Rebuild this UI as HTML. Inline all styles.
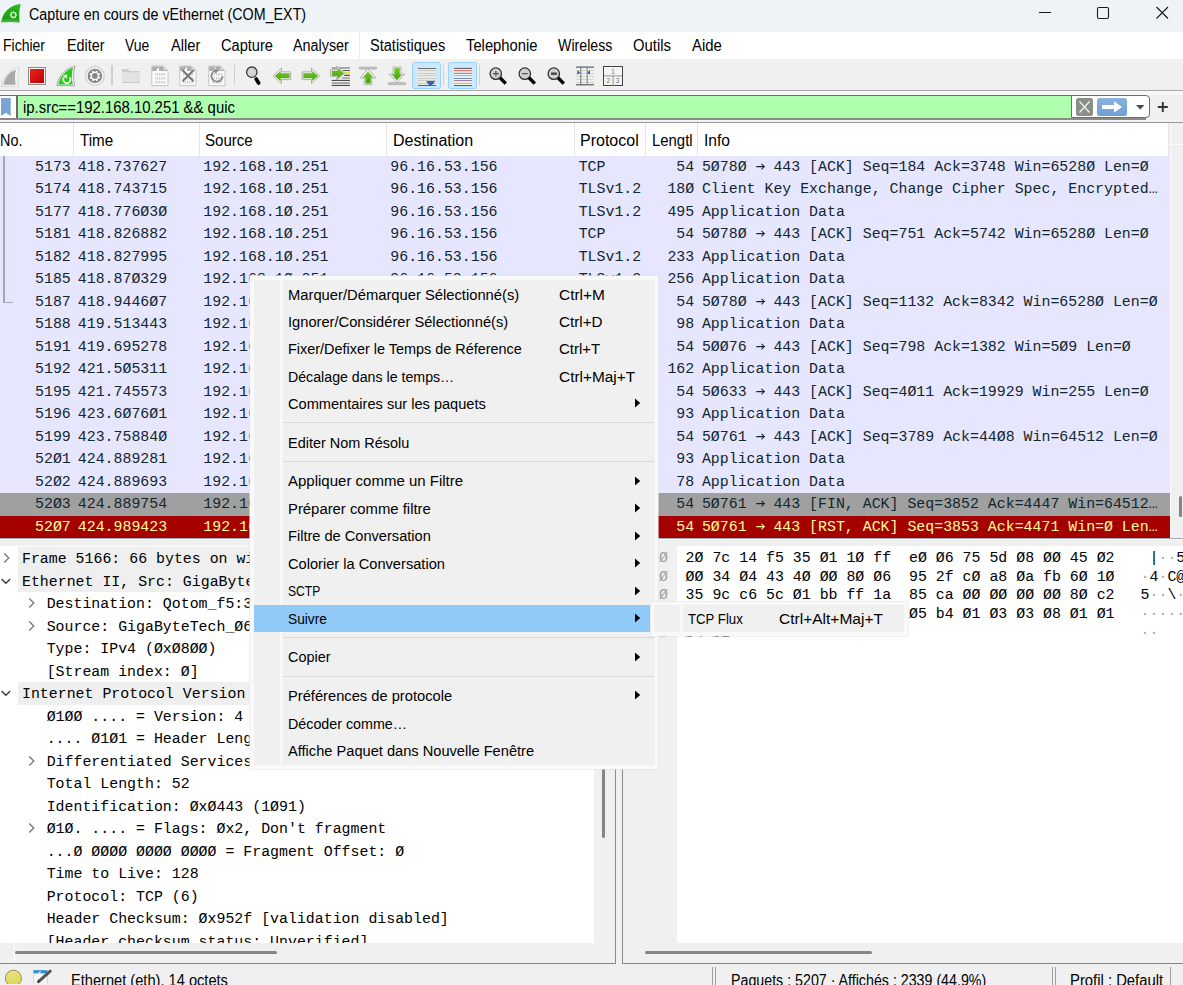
<!DOCTYPE html>
<html><head><meta charset="utf-8"><title>Wireshark</title>
<style>
html,body{margin:0;padding:0}
body{width:1183px;height:985px;overflow:hidden;position:relative;background:#f0f0f0}
body div, body svg{position:absolute}
.t{white-space:pre;line-height:0;height:0}
.S{font-family:"Liberation Sans", sans-serif}
.M{font-family:"Liberation Mono", monospace}
</style></head><body>
<div style="left:0px;top:0px;width:1183px;height:32px;background:#eef3f8;"></div>
<svg style="left:0px;top:2px;" width="24" height="24" viewBox="0 0 24 24"><defs><linearGradient id="gf" x1="0" y1="0" x2="0" y2="1"><stop offset="0" stop-color="#2cba1c"/><stop offset=".75" stop-color="#1a9e12"/><stop offset="1" stop-color="#5cb858"/></linearGradient></defs><path d="M1.2 20.5 C2.2 11 9 3.2 20.7 2 C19.2 8 18.7 14 19.8 20.8 C13 19.8 7 19.8 1.2 20.5 Z" fill="url(#gf)"/><g fill="#d8eed2"><rect x="12.8" y="9.3" width="1.3" height="1.6" transform="rotate(0 13.4 12.9)"/><rect x="12.8" y="9.3" width="1.3" height="1.6" transform="rotate(45 13.4 12.9)"/><rect x="12.8" y="9.3" width="1.3" height="1.6" transform="rotate(90 13.4 12.9)"/><rect x="12.8" y="9.3" width="1.3" height="1.6" transform="rotate(135 13.4 12.9)"/><rect x="12.8" y="9.3" width="1.3" height="1.6" transform="rotate(180 13.4 12.9)"/><rect x="12.8" y="9.3" width="1.3" height="1.6" transform="rotate(225 13.4 12.9)"/><rect x="12.8" y="9.3" width="1.3" height="1.6" transform="rotate(270 13.4 12.9)"/><rect x="12.8" y="9.3" width="1.3" height="1.6" transform="rotate(315 13.4 12.9)"/></g><circle cx="13.4" cy="12.9" r="2.4" fill="none" stroke="#d8eed2" stroke-width="1.2"/></svg>
<div class="t S" style="left:28.50px;top:14.70px;font-size:16px;color:#000;transform:scaleX(0.8929);transform-origin:0 0;">Capture en cours de vEthernet (COM_EXT)</div>
<svg style="left:1030px;top:0px;" width="153" height="32" viewBox="0 0 153 32"><line x1="9" y1="12.5" x2="21" y2="12.5" stroke="#1a1a1a" stroke-width="1"/><rect x="67.5" y="7.5" width="11" height="11" rx="1.5" fill="none" stroke="#1a1a1a" stroke-width="1.1"/><path d="M126.5 7 L138 18.5 M138 7 L126.5 18.5" stroke="#1a1a1a" stroke-width="1.1"/></svg>
<div style="left:0px;top:32px;width:1183px;height:27px;background:#ffffff;"></div>
<div style="left:359px;top:32px;width:1px;height:26px;background:#ececec;"></div>
<div class="t S" style="left:3.00px;top:46.20px;font-size:16px;color:#000;transform:scaleX(0.8747);transform-origin:0 0;">Fichier</div>
<div class="t S" style="left:66.50px;top:46.20px;font-size:16px;color:#000;transform:scaleX(0.8949);transform-origin:0 0;">Editer</div>
<div class="t S" style="left:125.40px;top:46.20px;font-size:16px;color:#000;transform:scaleX(0.8718);transform-origin:0 0;">Vue</div>
<div class="t S" style="left:171.00px;top:46.20px;font-size:16px;color:#000;transform:scaleX(0.9183);transform-origin:0 0;">Aller</div>
<div class="t S" style="left:220.70px;top:46.20px;font-size:16px;color:#000;transform:scaleX(0.9134);transform-origin:0 0;">Capture</div>
<div class="t S" style="left:293.30px;top:46.20px;font-size:16px;color:#000;transform:scaleX(0.8979);transform-origin:0 0;">Analyser</div>
<div class="t S" style="left:369.80px;top:46.20px;font-size:16px;color:#000;transform:scaleX(0.9093);transform-origin:0 0;">Statistiques</div>
<div class="t S" style="left:466.10px;top:46.20px;font-size:16px;color:#000;transform:scaleX(0.9239);transform-origin:0 0;">Telephonie</div>
<div class="t S" style="left:558.40px;top:46.20px;font-size:16px;color:#000;transform:scaleX(0.8868);transform-origin:0 0;">Wireless</div>
<div class="t S" style="left:633.40px;top:46.20px;font-size:16px;color:#000;transform:scaleX(0.9267);transform-origin:0 0;">Outils</div>
<div class="t S" style="left:691.90px;top:46.20px;font-size:16px;color:#000;transform:scaleX(0.9308);transform-origin:0 0;">Aide</div>
<div style="left:0px;top:59px;width:1183px;height:31px;background:#f0f0f0;"></div>
<div style="left:0px;top:90px;width:1183px;height:1px;background:#a8a8a8;"></div>
<div style="left:0px;top:91px;width:1183px;height:4px;background:#f7f7f7;"></div>
<div style="left:111px;top:65px;width:2px;height:20px;background:#cfcfcf;"></div>
<div style="left:234px;top:65px;width:1px;height:20px;background:#cfcfcf;"></div>
<div style="left:412.1px;top:62.1px;width:28.6px;height:26.65px;background:#cce8ff;border:1px solid #99d1ff;border-radius:2.5px;box-sizing:border-box"></div>
<div style="left:443px;top:65px;width:1px;height:20px;background:#cfcfcf;"></div>
<div style="left:448.1px;top:62.1px;width:28.6px;height:26.65px;background:#cce8ff;border:1px solid #99d1ff;border-radius:2.5px;box-sizing:border-box"></div>
<div style="left:479px;top:65px;width:1px;height:20px;background:#cfcfcf;"></div>
<svg style="left:0px;top:62px;" width="24" height="28" viewBox="0 0 24 28"><path d="M1.4 24.4 C3 15 9 7 19.3 5.1 C17.6 11 17.3 18 18.5 24.4 Z" fill="#f6f6f6" stroke="#d2d2d2" stroke-width="0.9"/><path d="M3.4 22.7 C5 15 9.5 9.5 15.9 8 C14.6 12 14.5 17.5 15.8 22.7 Z" fill="#a9a9a9"/></svg>
<svg style="left:27px;top:66px;" width="20" height="20" viewBox="0 0 20 20"><rect x="1.5" y="1.5" width="17" height="17" fill="#fafafa" stroke="#8c8c8c" stroke-width="1"/><defs><linearGradient id="gr" x1="0" y1="0" x2="1" y2="1"><stop offset="0" stop-color="#e82424"/><stop offset="1" stop-color="#c20000"/></linearGradient></defs><rect x="3" y="3" width="14" height="14" fill="url(#gr)"/></svg>
<svg style="left:52px;top:62px;" width="28" height="28" viewBox="0 0 28 28"><path d="M4.8 23.6 C6.5 14 13 6 23 4.3 C21.3 10 21 17 22.7 23.6 Z" fill="#f8f8f8" stroke="#a4a4a4" stroke-width="1"/><path d="M6.3 22.5 C8 14.5 13.5 8 21 5.7 C19.6 10.5 19.4 17 20.8 22.5 Z" fill="#22cc14"/><path d="M12 15.3 A3.6 3.6 0 1 0 17.6 15.2" fill="none" stroke="#fff" stroke-width="1.6"/><path d="M10.8 13.4 L15.3 12.2 L14.6 16.8 Z" fill="#fff"/></svg>
<svg style="left:84px;top:65px;" width="22" height="22" viewBox="0 0 22 22"><circle cx="10.9" cy="10.9" r="9.4" fill="#f2f2f2" stroke="#cfcfcf" stroke-width="1.1"/><circle cx="10.9" cy="10.9" r="7.2" fill="#878787"/><g fill="#fafafa"><rect x="9.9" y="5.5" width="2" height="2.2" transform="rotate(20 10.9 10.9)"/><rect x="9.9" y="5.5" width="2" height="2.2" transform="rotate(65 10.9 10.9)"/><rect x="9.9" y="5.5" width="2" height="2.2" transform="rotate(110 10.9 10.9)"/><rect x="9.9" y="5.5" width="2" height="2.2" transform="rotate(155 10.9 10.9)"/><rect x="9.9" y="5.5" width="2" height="2.2" transform="rotate(200 10.9 10.9)"/><rect x="9.9" y="5.5" width="2" height="2.2" transform="rotate(245 10.9 10.9)"/><rect x="9.9" y="5.5" width="2" height="2.2" transform="rotate(290 10.9 10.9)"/><rect x="9.9" y="5.5" width="2" height="2.2" transform="rotate(335 10.9 10.9)"/></g><circle cx="10.9" cy="10.9" r="4" fill="#fafafa"/><circle cx="10.9" cy="10.9" r="2.8" fill="#858585"/></svg>
<svg style="left:116px;top:62px;" width="28" height="28" viewBox="0 0 28 28"><path d="M6 7 L12.3 7 L13.6 9.1 L23.9 9.1 L23.9 20.9 L6 20.9 Z" fill="#cdcdcd"/><rect x="6" y="10.3" width="17.9" height="10.6" fill="#e3e3e3"/><rect x="6" y="20" width="17.9" height="1" fill="#c9c9c9"/></svg>
<svg style="left:146px;top:62px;" width="28" height="28" viewBox="0 0 28 28"><path d="M5.8 4 L17.2 4 L22 8.8 L22 23.7 L5.8 23.7 Z" fill="#fdfdfd" stroke="#c2c2c2" stroke-width="1"/><path d="M6.2 4.4 L17 4.4 L21.6 8.9 L6.2 8.9 Z" fill="#adadad"/><path d="M10 8.9 C11 7 12 5.8 13 5.3 L13 8.9 Z" fill="#fdfdfd"/><path d="M17.5 5.5 L17.5 8 L20 8 Z" fill="#f0f0f0"/><g fill="#cbcbcb"><rect x="9.1" y="11.1" width="1.1" height="2.5"/><rect x="9.1" y="15.1" width="1.1" height="2.5"/><rect x="9.1" y="18.9" width="1.1" height="2.5"/><rect x="10.9" y="11.1" width="1.1" height="2.5"/><rect x="10.9" y="15.1" width="1.1" height="2.5"/><rect x="10.9" y="18.9" width="1.1" height="2.5"/><rect x="13" y="11.1" width="1.1" height="2.5"/><rect x="13" y="15.1" width="1.1" height="2.5"/><rect x="13" y="18.9" width="1.1" height="2.5"/><rect x="14.8" y="11.1" width="1.1" height="2.5"/><rect x="14.8" y="15.1" width="1.1" height="2.5"/><rect x="14.8" y="18.9" width="1.1" height="2.5"/><rect x="16.5" y="11.1" width="1.1" height="2.5"/><rect x="16.5" y="15.1" width="1.1" height="2.5"/><rect x="16.5" y="18.9" width="1.1" height="2.5"/><rect x="18.2" y="11.1" width="1.1" height="2.5"/><rect x="18.2" y="15.1" width="1.1" height="2.5"/><rect x="18.2" y="18.9" width="1.1" height="2.5"/></g></svg>
<svg style="left:174px;top:62px;" width="28" height="28" viewBox="0 0 28 28"><path d="M5.8 4 L17.2 4 L22 8.8 L22 23.7 L5.8 23.7 Z" fill="#fdfdfd" stroke="#c2c2c2" stroke-width="1"/><path d="M6.2 4.4 L17 4.4 L21.6 8.9 L6.2 8.9 Z" fill="#adadad"/><path d="M10 8.9 C11 7 12 5.8 13 5.3 L13 8.9 Z" fill="#fdfdfd"/><path d="M17.5 5.5 L17.5 8 L20 8 Z" fill="#f0f0f0"/><g fill="#cbcbcb"><rect x="9.1" y="11.1" width="1.1" height="2.5"/><rect x="9.1" y="15.1" width="1.1" height="2.5"/><rect x="9.1" y="18.9" width="1.1" height="2.5"/><rect x="10.9" y="11.1" width="1.1" height="2.5"/><rect x="10.9" y="15.1" width="1.1" height="2.5"/><rect x="10.9" y="18.9" width="1.1" height="2.5"/><rect x="13" y="11.1" width="1.1" height="2.5"/><rect x="13" y="15.1" width="1.1" height="2.5"/><rect x="13" y="18.9" width="1.1" height="2.5"/><rect x="14.8" y="11.1" width="1.1" height="2.5"/><rect x="14.8" y="15.1" width="1.1" height="2.5"/><rect x="14.8" y="18.9" width="1.1" height="2.5"/><rect x="16.5" y="11.1" width="1.1" height="2.5"/><rect x="16.5" y="15.1" width="1.1" height="2.5"/><rect x="16.5" y="18.9" width="1.1" height="2.5"/><rect x="18.2" y="11.1" width="1.1" height="2.5"/><rect x="18.2" y="15.1" width="1.1" height="2.5"/><rect x="18.2" y="18.9" width="1.1" height="2.5"/></g><path d="M8.5 8.2 L19.6 19.3 M19.6 8.2 L8.5 19.3" stroke="#7a7a7a" stroke-width="2"/></svg>
<svg style="left:203px;top:62px;" width="28" height="28" viewBox="0 0 28 28"><path d="M5.8 4 L17.2 4 L22 8.8 L22 23.7 L5.8 23.7 Z" fill="#fdfdfd" stroke="#c2c2c2" stroke-width="1"/><path d="M6.2 4.4 L17 4.4 L21.6 8.9 L6.2 8.9 Z" fill="#adadad"/><path d="M10 8.9 C11 7 12 5.8 13 5.3 L13 8.9 Z" fill="#fdfdfd"/><path d="M17.5 5.5 L17.5 8 L20 8 Z" fill="#f0f0f0"/><g fill="#cbcbcb"><rect x="9.1" y="11.1" width="1.1" height="2.5"/><rect x="9.1" y="15.1" width="1.1" height="2.5"/><rect x="9.1" y="18.9" width="1.1" height="2.5"/><rect x="10.9" y="11.1" width="1.1" height="2.5"/><rect x="10.9" y="15.1" width="1.1" height="2.5"/><rect x="10.9" y="18.9" width="1.1" height="2.5"/><rect x="13" y="11.1" width="1.1" height="2.5"/><rect x="13" y="15.1" width="1.1" height="2.5"/><rect x="13" y="18.9" width="1.1" height="2.5"/><rect x="14.8" y="11.1" width="1.1" height="2.5"/><rect x="14.8" y="15.1" width="1.1" height="2.5"/><rect x="14.8" y="18.9" width="1.1" height="2.5"/><rect x="16.5" y="11.1" width="1.1" height="2.5"/><rect x="16.5" y="15.1" width="1.1" height="2.5"/><rect x="16.5" y="18.9" width="1.1" height="2.5"/><rect x="18.2" y="11.1" width="1.1" height="2.5"/><rect x="18.2" y="15.1" width="1.1" height="2.5"/><rect x="18.2" y="18.9" width="1.1" height="2.5"/></g><path d="M13.6 8.4 A5.6 5.6 0 1 0 19.6 14" fill="none" stroke="#8a8a8a" stroke-width="1.8"/><path d="M11 6.6 L15.8 8.6 L12.4 11.8 Z" fill="#8a8a8a"/></svg>
<svg style="left:242px;top:62px;" width="28" height="28" viewBox="0 0 28 28"><circle cx="9.8" cy="10.2" r="5.2" fill="#d4d4d4" stroke="#3a3a3a" stroke-width="1.3"/><path d="M14.2 17 L16.6 21" stroke="#000" stroke-width="3.6" stroke-linecap="round"/></svg>
<svg style="left:270px;top:62px;" width="28" height="28" viewBox="0 0 28 28"><defs><linearGradient id="ga" x1="0" y1="0" x2="0" y2="1"><stop offset="0" stop-color="#70c42a"/><stop offset="1" stop-color="#4ea60c"/></linearGradient></defs><path d="M3.1 13.9 L11.4 6.1 L11.4 9.9 L20.7 9.9 L20.7 17.6 L11.4 17.6 L11.4 21.6 Z" fill="#fafafa" stroke="#a4a4a4" stroke-width="0.9" stroke-linejoin="round"/><path d="M4.7 13.9 L10.7 8.8 L10.7 11.2 L19.6 11.2 L19.6 16.3 L10.7 16.3 L10.7 18.9 Z" fill="url(#ga)"/></svg>
<svg style="left:298px;top:62px;" width="28" height="28" viewBox="0 0 28 28"><g transform="translate(24.9 0) scale(-1 1)"><path d="M3.1 13.9 L11.4 6.1 L11.4 9.9 L20.7 9.9 L20.7 17.6 L11.4 17.6 L11.4 21.6 Z" fill="#fafafa" stroke="#a4a4a4" stroke-width="0.9" stroke-linejoin="round"/><path d="M4.7 13.9 L10.7 8.8 L10.7 11.2 L19.6 11.2 L19.6 16.3 L10.7 16.3 L10.7 18.9 Z" fill="url(#ga)"/></g></svg>
<svg style="left:326px;top:62px;" width="28" height="28" viewBox="0 0 28 28"><rect x="5.8" y="5.1" width="18.1" height="1.7" fill="#9c9c9c"/><rect x="17" y="8.1" width="6.9" height="0.9" fill="#3a3a3a"/><rect x="19" y="9.7" width="4.9" height="2.8" fill="#f8e030"/><rect x="18.2" y="12.9" width="5.7" height="1" fill="#3a3a3a"/><rect x="15.9" y="15.3" width="8" height="1.5" fill="#9c9c9c"/><rect x="5.7" y="17.9" width="18.2" height="1" fill="#3a3a3a"/><rect x="5.7" y="20.2" width="18.2" height="1.7" fill="#9c9c9c"/><rect x="5.7" y="22.9" width="18.2" height="1" fill="#3a3a3a"/><path d="M4.5 7.6 L10.6 7.6 L10.6 4.1 L18.9 11.2 L10.6 18.2 L10.6 14.8 L4.5 14.8 Z" fill="#f4f4f4" stroke="#a0a0a0" stroke-width="0.8" stroke-linejoin="round"/><path d="M5.8 8.8 L11.4 8.8 L11.4 5.7 L17.9 11.2 L11.4 16.8 L11.4 13.9 L5.8 13.9 Z" fill="url(#ga)"/></svg>
<svg style="left:354px;top:62px;" width="28" height="28" viewBox="0 0 28 28"><defs><linearGradient id="gu" x1="0" y1="0" x2="0" y2="1"><stop offset="0" stop-color="#74c82c"/><stop offset="1" stop-color="#46a00a"/></linearGradient></defs><rect x="5" y="5" width="17.9" height="2.2" rx="1" fill="#bdbdbd" stroke="#a8a8a8" stroke-width=".5"/><path d="M13.9 6.8 L21.7 15.9 L17.9 15.9 L17.9 22.7 L10.1 22.7 L10.1 15.9 L6.3 15.9 Z" fill="#fafafa" stroke="#a8a8a8" stroke-width="0.9" stroke-linejoin="round"/><path d="M13.9 9.4 L19.3 15.4 L16.8 15.4 L16.8 21.5 L11.4 21.5 L11.4 15.4 L8.8 15.4 Z" fill="url(#gu)"/></svg>
<svg style="left:383px;top:62px;" width="28" height="28" viewBox="0 0 28 28"><rect x="5" y="20.5" width="17.9" height="2.2" rx="1" fill="#bdbdbd" stroke="#a8a8a8" stroke-width=".5"/><path d="M13.9 20.5 L21.7 12.2 L17.9 12.2 L17.9 5 L10.1 5 L10.1 12.2 L6.3 12.2 Z" fill="#fafafa" stroke="#a8a8a8" stroke-width="0.9" stroke-linejoin="round"/><path d="M13.9 18.2 L19.3 12.5 L16.8 12.5 L16.8 6.1 L11.4 6.1 L11.4 12.5 L8.8 12.5 Z" fill="url(#gu)"/></svg>
<svg style="left:410px;top:60px;" width="32" height="32" viewBox="0 0 32 32"><rect x="8" y="8.9" width="18" height="16.1" fill="#ebebe6"/><rect x="8" y="8" width="18" height="0.9" fill="#606060"/><rect x="8" y="10.2" width="18" height="0.8" fill="#c4c4bc"/><rect x="8" y="13.1" width="18" height="0.8" fill="#c4c4bc"/><rect x="8" y="15.2" width="18" height="0.8" fill="#c4c4bc"/><rect x="8" y="18" width="18" height="0.8" fill="#c4c4bc"/><rect x="8" y="20.1" width="18" height="0.8" fill="#c4c4bc"/><rect x="8" y="23" width="18" height="0.8" fill="#c4c4bc"/><rect x="8" y="25" width="18" height="1" fill="#606060"/><path d="M16.2 21.3 Q16.2 21 17 21 L24.2 21 Q25 21 25 21.6 L21.6 25.7 L19.6 25.7 Z" fill="#3466ad"/></svg>
<svg style="left:446px;top:60px;" width="32" height="32" viewBox="0 0 32 32"><rect x="8" y="8" width="18" height="18" fill="#f2f4f4"/><rect x="8" y="7.9" width="18" height="1.05" fill="#606060"/><rect x="8" y="10.1" width="18" height="1.05" fill="#f06060"/><rect x="8" y="12.8" width="18" height="1.05" fill="#6a8ac0"/><rect x="8" y="15.0" width="18" height="1.05" fill="#90d860"/><rect x="8" y="17.9" width="18" height="1.05" fill="#6a8ac0"/><rect x="8" y="20.0" width="18" height="1.05" fill="#a080a0"/><rect x="8" y="22.8" width="18" height="1.05" fill="#d8b848"/><rect x="8" y="25.0" width="18" height="1.05" fill="#606060"/></svg>
<svg style="left:484px;top:62px;" width="28" height="28" viewBox="0 0 28 28"><circle cx="11.8" cy="11.65" r="5.7" fill="#d0d0d0" stroke="#303030" stroke-width="1.3"/><path d="M17.2 17 L20.6 20.4" stroke="#000" stroke-width="3.4" stroke-linecap="square"/><path d="M11.9 9.1 L11.9 14.6 M9.1 11.65 L14.8 11.65" stroke="#505050" stroke-width="1.2"/></svg>
<svg style="left:513px;top:62px;" width="28" height="28" viewBox="0 0 28 28"><circle cx="11.8" cy="11.65" r="5.7" fill="#d0d0d0" stroke="#303030" stroke-width="1.3"/><path d="M17.2 17 L20.6 20.4" stroke="#000" stroke-width="3.4" stroke-linecap="square"/><path d="M9.1 11.65 L14.8 11.65" stroke="#505050" stroke-width="1.2"/></svg>
<svg style="left:542px;top:62px;" width="28" height="28" viewBox="0 0 28 28"><circle cx="11.8" cy="11.65" r="5.7" fill="#d0d0d0" stroke="#303030" stroke-width="1.3"/><path d="M17.2 17 L20.6 20.4" stroke="#000" stroke-width="3.4" stroke-linecap="square"/><rect x="9.1" y="10.5" width="5.7" height="2.3" fill="#404040"/></svg>
<svg style="left:575px;top:65px;" width="20" height="22" viewBox="0 0 20 22"><rect x="1" y="5" width="18" height=".8" fill="#cfcfc8"/><rect x="1" y="8" width="18" height=".8" fill="#cfcfc8"/><rect x="1" y="11" width="18" height=".8" fill="#cfcfc8"/><rect x="1" y="14" width="18" height=".8" fill="#cfcfc8"/><rect x="1" y="17" width="18" height=".8" fill="#cfcfc8"/><rect x="1" y="1.6" width="18" height="1" fill="#404040"/><rect x="1" y="19.3" width="18" height="1" fill="#404040"/><rect x="5.3" y="1.6" width="1" height="18.5" fill="#707070"/><rect x="11.6" y="1.6" width="1.2" height="18.5" fill="#909090"/><path d="M2.3 5.3 L5.3 7.5 L2.3 9.8 Z" fill="#2a64b8"/><path d="M15 5.3 L12 7.5 L15 9.8 Z" fill="#2a64b8"/></svg>
<svg style="left:602px;top:65px;" width="22" height="22" viewBox="0 0 22 22"><rect x="1.5" y="1.5" width="19" height="19" fill="#f4f4f4" stroke="#444" stroke-width="1"/><rect x="2" y="10.2" width="18" height="1.3" fill="#a8a8a8"/><rect x="10.5" y="11" width="1.3" height="9.5" fill="#a8a8a8"/><text x="11" y="8.6" font-size="6.5" text-anchor="middle" fill="#777" font-family="Liberation Sans">1</text><text x="6.3" y="18.3" font-size="6.5" text-anchor="middle" fill="#777" font-family="Liberation Sans">2</text><text x="15.5" y="18.3" font-size="6.5" text-anchor="middle" fill="#777" font-family="Liberation Sans">3</text></svg>
<div style="left:0px;top:95px;width:1183px;height:28px;background:#f0f0f0;"></div>
<div style="left:0px;top:95px;width:1146px;height:1px;background:#6e6e6e;"></div>
<div style="left:0px;top:118.2px;width:1146px;height:1.6px;background:#8a8a8a;"></div>
<div style="left:0px;top:119.8px;width:1183px;height:1.2px;background:#f4f4f4;"></div>
<div style="left:0px;top:121.5px;width:1183px;height:1.3px;background:#999999;"></div>
<div style="left:0px;top:96px;width:16px;height:22.2px;background:#ffffff;"></div>
<div style="left:16px;top:96px;width:2px;height:22.2px;background:#6a6a6a;"></div>
<div style="left:18px;top:96px;width:1053px;height:22.2px;background:#afffaf;"></div>
<svg style="left:0px;top:97px;" width="12" height="20" viewBox="0 0 12 20"><path d="M1 1 L10.7 1 L10.7 19 L5.85 15.8 L1 19 Z" fill="#7aa4d6"/></svg>
<div class="t S" style="left:22.80px;top:107.50px;font-size:16px;color:#000;transform:scaleX(0.9306);transform-origin:0 0;">ip.src==192.168.10.251 &amp;&amp; quic</div>
<div style="left:1071px;top:95px;width:79px;height:23px;background:#fff;border:1px solid #6e6e6e;border-left:1.5px solid #6e6e6e;border-radius:0 4px 4px 0;box-sizing:border-box"></div>
<div style="left:1076px;top:98px;width:17px;height:18px;background:#8b8e89;border-radius:2.5px"></div>
<svg style="left:1076px;top:98px;" width="17" height="18" viewBox="0 0 17 18"><path d="M3.5 3.5 L13.5 14.5 M13.5 3.5 L3.5 14.5" stroke="#f4f4f4" stroke-width="1.2"/></svg>
<div style="left:1097px;top:98px;width:30px;height:18px;background:linear-gradient(#8ab2de,#6f9fd4);border-radius:2.5px"></div>
<svg style="left:1097px;top:98px;" width="30" height="18" viewBox="0 0 30 18"><path d="M5 7 L17 7 L17 3.3 L25 9 L17 14.7 L17 11 L5 11 Z" fill="#ffffff"/></svg>
<svg style="left:1134px;top:103px;" width="12" height="8" viewBox="0 0 12 8"><path d="M2 2 L10.5 2 L6.25 6.5 Z" fill="#4a4a4a"/></svg>
<svg style="left:1155px;top:99px;" width="16" height="16" viewBox="0 0 16 16"><path d="M7.8 3 L7.8 13 M2.8 8 L12.8 8" stroke="#333" stroke-width="1.9"/></svg>
<div style="left:0px;top:122.8px;width:1183px;height:415.2px;background:#ffffff;"></div>
<div style="left:1170px;top:123px;width:13px;height:415px;background:#fbfbfb;"></div>
<div style="left:1171px;top:123px;width:12px;height:415px;background:#f0f0f0;"></div>
<div style="left:1171px;top:143.5px;width:12px;height:1.3px;background:#fcfcfc;"></div>
<div style="left:73px;top:123px;width:1px;height:33px;background:#e5e5e5;"></div>
<div style="left:199px;top:123px;width:1px;height:33px;background:#e5e5e5;"></div>
<div style="left:386px;top:123px;width:1px;height:33px;background:#e5e5e5;"></div>
<div style="left:574px;top:123px;width:1px;height:33px;background:#e5e5e5;"></div>
<div style="left:645px;top:123px;width:1px;height:33px;background:#e5e5e5;"></div>
<div style="left:697px;top:123px;width:1px;height:33px;background:#e5e5e5;"></div>
<div style="left:1168px;top:123px;width:2px;height:33px;background:#e8e8e8;"></div>
<div class="t S" style="left:0.30px;top:141.30px;font-size:16px;color:#000;transform:scaleX(0.8997);transform-origin:0 0;">No.</div>
<div class="t S" style="left:80.10px;top:141.30px;font-size:16px;color:#000;transform:scaleX(0.9468);transform-origin:0 0;">Time</div>
<div class="t S" style="left:204.90px;top:141.30px;font-size:16px;color:#000;transform:scaleX(0.9411);transform-origin:0 0;">Source</div>
<div class="t S" style="left:392.80px;top:141.30px;font-size:16px;color:#000;transform:scaleX(1.0006);transform-origin:0 0;">Destination</div>
<div class="t S" style="left:580.00px;top:141.30px;font-size:16px;color:#000;transform:scaleX(1.0002);transform-origin:0 0;">Protocol</div>
<div class="t S" style="left:651.90px;top:141.30px;font-size:16px;color:#000;transform:scaleX(0.9312);transform-origin:0 0;">Lengtl</div>
<div class="t S" style="left:704.00px;top:141.30px;font-size:16px;color:#000;transform:scaleX(0.9742);transform-origin:0 0;">Info</div>
<div style="left:0px;top:156px;width:1170px;height:22px;background:#e7e6ff;"></div>
<div class="t M" style="left:35.04px;top:166.90px;font-size:14.9px;color:#12272e;">5173</div>
<div class="t M" style="left:77.8px;top:166.90px;font-size:14.9px;color:#12272e;">418.737627</div>
<div class="t M" style="left:203.3px;top:166.90px;font-size:14.9px;color:#12272e;">192.168.1Ø.251</div>
<div class="t M" style="left:390.3px;top:166.90px;font-size:14.9px;color:#12272e;">96.16.53.156</div>
<div class="t M" style="left:578.7px;top:166.90px;font-size:14.9px;color:#12272e;">TCP</div>
<div class="t M" style="left:676.32px;top:166.90px;font-size:14.9px;color:#12272e;">54</div>
<div class="t M" style="left:701.9px;top:166.90px;font-size:14.9px;color:#12272e;">5Ø78Ø   443 [ACK] Seq=184 Ack=3748 Win=6528Ø Len=Ø</div>
<svg style="left:755.54px;top:162px;" width="10" height="9" viewBox="0 0 10 9"><path d="M0.3 4.6 L8.4 4.6 M5.5 1.9 L8.4 4.6 L5.5 7.3" fill="none" stroke="#12272e" stroke-width="1.05"/></svg>
<div style="left:0px;top:178px;width:1170px;height:23px;background:#e7e6ff;"></div>
<div class="t M" style="left:35.04px;top:188.90px;font-size:14.9px;color:#12272e;">5174</div>
<div class="t M" style="left:77.8px;top:188.90px;font-size:14.9px;color:#12272e;">418.743715</div>
<div class="t M" style="left:203.3px;top:188.90px;font-size:14.9px;color:#12272e;">192.168.1Ø.251</div>
<div class="t M" style="left:390.3px;top:188.90px;font-size:14.9px;color:#12272e;">96.16.53.156</div>
<div class="t M" style="left:578.7px;top:188.90px;font-size:14.9px;color:#12272e;">TLSv1.2</div>
<div class="t M" style="left:667.38px;top:188.90px;font-size:14.9px;color:#12272e;">18Ø</div>
<div class="t M" style="left:701.9px;top:188.90px;font-size:14.9px;color:#12272e;">Client Key Exchange, Change Cipher Spec, Encrypted…</div>
<div style="left:0px;top:201px;width:1170px;height:22px;background:#e7e6ff;"></div>
<div class="t M" style="left:35.04px;top:211.90px;font-size:14.9px;color:#12272e;">5177</div>
<div class="t M" style="left:77.8px;top:211.90px;font-size:14.9px;color:#12272e;">418.776Ø3Ø</div>
<div class="t M" style="left:203.3px;top:211.90px;font-size:14.9px;color:#12272e;">192.168.1Ø.251</div>
<div class="t M" style="left:390.3px;top:211.90px;font-size:14.9px;color:#12272e;">96.16.53.156</div>
<div class="t M" style="left:578.7px;top:211.90px;font-size:14.9px;color:#12272e;">TLSv1.2</div>
<div class="t M" style="left:667.38px;top:211.90px;font-size:14.9px;color:#12272e;">495</div>
<div class="t M" style="left:701.9px;top:211.90px;font-size:14.9px;color:#12272e;">Application Data</div>
<div style="left:0px;top:223px;width:1170px;height:23px;background:#e7e6ff;"></div>
<div class="t M" style="left:35.04px;top:233.90px;font-size:14.9px;color:#12272e;">5181</div>
<div class="t M" style="left:77.8px;top:233.90px;font-size:14.9px;color:#12272e;">418.826882</div>
<div class="t M" style="left:203.3px;top:233.90px;font-size:14.9px;color:#12272e;">192.168.1Ø.251</div>
<div class="t M" style="left:390.3px;top:233.90px;font-size:14.9px;color:#12272e;">96.16.53.156</div>
<div class="t M" style="left:578.7px;top:233.90px;font-size:14.9px;color:#12272e;">TCP</div>
<div class="t M" style="left:676.32px;top:233.90px;font-size:14.9px;color:#12272e;">54</div>
<div class="t M" style="left:701.9px;top:233.90px;font-size:14.9px;color:#12272e;">5Ø78Ø   443 [ACK] Seq=751 Ack=5742 Win=6528Ø Len=Ø</div>
<svg style="left:755.54px;top:229px;" width="10" height="9" viewBox="0 0 10 9"><path d="M0.3 4.6 L8.4 4.6 M5.5 1.9 L8.4 4.6 L5.5 7.3" fill="none" stroke="#12272e" stroke-width="1.05"/></svg>
<div style="left:0px;top:246px;width:1170px;height:22px;background:#e7e6ff;"></div>
<div class="t M" style="left:35.04px;top:256.90px;font-size:14.9px;color:#12272e;">5182</div>
<div class="t M" style="left:77.8px;top:256.90px;font-size:14.9px;color:#12272e;">418.827995</div>
<div class="t M" style="left:203.3px;top:256.90px;font-size:14.9px;color:#12272e;">192.168.1Ø.251</div>
<div class="t M" style="left:390.3px;top:256.90px;font-size:14.9px;color:#12272e;">96.16.53.156</div>
<div class="t M" style="left:578.7px;top:256.90px;font-size:14.9px;color:#12272e;">TLSv1.2</div>
<div class="t M" style="left:667.38px;top:256.90px;font-size:14.9px;color:#12272e;">233</div>
<div class="t M" style="left:701.9px;top:256.90px;font-size:14.9px;color:#12272e;">Application Data</div>
<div style="left:0px;top:268px;width:1170px;height:23px;background:#e7e6ff;"></div>
<div class="t M" style="left:35.04px;top:278.90px;font-size:14.9px;color:#12272e;">5185</div>
<div class="t M" style="left:77.8px;top:278.90px;font-size:14.9px;color:#12272e;">418.87Ø329</div>
<div class="t M" style="left:203.3px;top:278.90px;font-size:14.9px;color:#12272e;">192.168.1Ø.251</div>
<div class="t M" style="left:390.3px;top:278.90px;font-size:14.9px;color:#12272e;">96.16.53.156</div>
<div class="t M" style="left:578.7px;top:278.90px;font-size:14.9px;color:#12272e;">TLSv1.2</div>
<div class="t M" style="left:667.38px;top:278.90px;font-size:14.9px;color:#12272e;">256</div>
<div class="t M" style="left:701.9px;top:278.90px;font-size:14.9px;color:#12272e;">Application Data</div>
<div style="left:0px;top:291px;width:1170px;height:22px;background:#e7e6ff;"></div>
<div class="t M" style="left:35.04px;top:301.90px;font-size:14.9px;color:#12272e;">5187</div>
<div class="t M" style="left:77.8px;top:301.90px;font-size:14.9px;color:#12272e;">418.9446Ø7</div>
<div class="t M" style="left:203.3px;top:301.90px;font-size:14.9px;color:#12272e;">192.168.1Ø.251</div>
<div class="t M" style="left:390.3px;top:301.90px;font-size:14.9px;color:#12272e;">96.16.53.156</div>
<div class="t M" style="left:578.7px;top:301.90px;font-size:14.9px;color:#12272e;">TCP</div>
<div class="t M" style="left:676.32px;top:301.90px;font-size:14.9px;color:#12272e;">54</div>
<div class="t M" style="left:701.9px;top:301.90px;font-size:14.9px;color:#12272e;">5Ø78Ø   443 [ACK] Seq=1132 Ack=8342 Win=6528Ø Len=Ø</div>
<svg style="left:755.54px;top:297px;" width="10" height="9" viewBox="0 0 10 9"><path d="M0.3 4.6 L8.4 4.6 M5.5 1.9 L8.4 4.6 L5.5 7.3" fill="none" stroke="#12272e" stroke-width="1.05"/></svg>
<div style="left:0px;top:313px;width:1170px;height:23px;background:#e7e6ff;"></div>
<div class="t M" style="left:35.04px;top:323.90px;font-size:14.9px;color:#12272e;">5188</div>
<div class="t M" style="left:77.8px;top:323.90px;font-size:14.9px;color:#12272e;">419.513443</div>
<div class="t M" style="left:203.3px;top:323.90px;font-size:14.9px;color:#12272e;">192.168.1Ø.251</div>
<div class="t M" style="left:390.3px;top:323.90px;font-size:14.9px;color:#12272e;">96.16.53.156</div>
<div class="t M" style="left:578.7px;top:323.90px;font-size:14.9px;color:#12272e;">TLSv1.2</div>
<div class="t M" style="left:676.32px;top:323.90px;font-size:14.9px;color:#12272e;">98</div>
<div class="t M" style="left:701.9px;top:323.90px;font-size:14.9px;color:#12272e;">Application Data</div>
<div style="left:0px;top:336px;width:1170px;height:22px;background:#e7e6ff;"></div>
<div class="t M" style="left:35.04px;top:346.90px;font-size:14.9px;color:#12272e;">5191</div>
<div class="t M" style="left:77.8px;top:346.90px;font-size:14.9px;color:#12272e;">419.695278</div>
<div class="t M" style="left:203.3px;top:346.90px;font-size:14.9px;color:#12272e;">192.168.1Ø.251</div>
<div class="t M" style="left:390.3px;top:346.90px;font-size:14.9px;color:#12272e;">96.16.53.156</div>
<div class="t M" style="left:578.7px;top:346.90px;font-size:14.9px;color:#12272e;">TCP</div>
<div class="t M" style="left:676.32px;top:346.90px;font-size:14.9px;color:#12272e;">54</div>
<div class="t M" style="left:701.9px;top:346.90px;font-size:14.9px;color:#12272e;">5ØØ76   443 [ACK] Seq=798 Ack=1382 Win=5Ø9 Len=Ø</div>
<svg style="left:755.54px;top:342px;" width="10" height="9" viewBox="0 0 10 9"><path d="M0.3 4.6 L8.4 4.6 M5.5 1.9 L8.4 4.6 L5.5 7.3" fill="none" stroke="#12272e" stroke-width="1.05"/></svg>
<div style="left:0px;top:358px;width:1170px;height:23px;background:#e7e6ff;"></div>
<div class="t M" style="left:35.04px;top:368.90px;font-size:14.9px;color:#12272e;">5192</div>
<div class="t M" style="left:77.8px;top:368.90px;font-size:14.9px;color:#12272e;">421.5Ø5311</div>
<div class="t M" style="left:203.3px;top:368.90px;font-size:14.9px;color:#12272e;">192.168.1Ø.251</div>
<div class="t M" style="left:390.3px;top:368.90px;font-size:14.9px;color:#12272e;">96.16.53.156</div>
<div class="t M" style="left:578.7px;top:368.90px;font-size:14.9px;color:#12272e;">TLSv1.2</div>
<div class="t M" style="left:667.38px;top:368.90px;font-size:14.9px;color:#12272e;">162</div>
<div class="t M" style="left:701.9px;top:368.90px;font-size:14.9px;color:#12272e;">Application Data</div>
<div style="left:0px;top:381px;width:1170px;height:22px;background:#e7e6ff;"></div>
<div class="t M" style="left:35.04px;top:391.90px;font-size:14.9px;color:#12272e;">5195</div>
<div class="t M" style="left:77.8px;top:391.90px;font-size:14.9px;color:#12272e;">421.745573</div>
<div class="t M" style="left:203.3px;top:391.90px;font-size:14.9px;color:#12272e;">192.168.1Ø.251</div>
<div class="t M" style="left:390.3px;top:391.90px;font-size:14.9px;color:#12272e;">96.16.53.156</div>
<div class="t M" style="left:578.7px;top:391.90px;font-size:14.9px;color:#12272e;">TCP</div>
<div class="t M" style="left:676.32px;top:391.90px;font-size:14.9px;color:#12272e;">54</div>
<div class="t M" style="left:701.9px;top:391.90px;font-size:14.9px;color:#12272e;">5Ø633   443 [ACK] Seq=4Ø11 Ack=19929 Win=255 Len=Ø</div>
<svg style="left:755.54px;top:387px;" width="10" height="9" viewBox="0 0 10 9"><path d="M0.3 4.6 L8.4 4.6 M5.5 1.9 L8.4 4.6 L5.5 7.3" fill="none" stroke="#12272e" stroke-width="1.05"/></svg>
<div style="left:0px;top:403px;width:1170px;height:23px;background:#e7e6ff;"></div>
<div class="t M" style="left:35.04px;top:413.90px;font-size:14.9px;color:#12272e;">5196</div>
<div class="t M" style="left:77.8px;top:413.90px;font-size:14.9px;color:#12272e;">423.6Ø76Ø1</div>
<div class="t M" style="left:203.3px;top:413.90px;font-size:14.9px;color:#12272e;">192.168.1Ø.251</div>
<div class="t M" style="left:390.3px;top:413.90px;font-size:14.9px;color:#12272e;">96.16.53.156</div>
<div class="t M" style="left:578.7px;top:413.90px;font-size:14.9px;color:#12272e;">TLSv1.2</div>
<div class="t M" style="left:676.32px;top:413.90px;font-size:14.9px;color:#12272e;">93</div>
<div class="t M" style="left:701.9px;top:413.90px;font-size:14.9px;color:#12272e;">Application Data</div>
<div style="left:0px;top:426px;width:1170px;height:22px;background:#e7e6ff;"></div>
<div class="t M" style="left:35.04px;top:436.90px;font-size:14.9px;color:#12272e;">5199</div>
<div class="t M" style="left:77.8px;top:436.90px;font-size:14.9px;color:#12272e;">423.75884Ø</div>
<div class="t M" style="left:203.3px;top:436.90px;font-size:14.9px;color:#12272e;">192.168.1Ø.251</div>
<div class="t M" style="left:390.3px;top:436.90px;font-size:14.9px;color:#12272e;">96.16.53.156</div>
<div class="t M" style="left:578.7px;top:436.90px;font-size:14.9px;color:#12272e;">TCP</div>
<div class="t M" style="left:676.32px;top:436.90px;font-size:14.9px;color:#12272e;">54</div>
<div class="t M" style="left:701.9px;top:436.90px;font-size:14.9px;color:#12272e;">5Ø761   443 [ACK] Seq=3789 Ack=44Ø8 Win=64512 Len=Ø</div>
<svg style="left:755.54px;top:432px;" width="10" height="9" viewBox="0 0 10 9"><path d="M0.3 4.6 L8.4 4.6 M5.5 1.9 L8.4 4.6 L5.5 7.3" fill="none" stroke="#12272e" stroke-width="1.05"/></svg>
<div style="left:0px;top:448px;width:1170px;height:23px;background:#e7e6ff;"></div>
<div class="t M" style="left:35.04px;top:458.90px;font-size:14.9px;color:#12272e;">52Ø1</div>
<div class="t M" style="left:77.8px;top:458.90px;font-size:14.9px;color:#12272e;">424.889281</div>
<div class="t M" style="left:203.3px;top:458.90px;font-size:14.9px;color:#12272e;">192.168.1Ø.251</div>
<div class="t M" style="left:390.3px;top:458.90px;font-size:14.9px;color:#12272e;">96.16.53.156</div>
<div class="t M" style="left:578.7px;top:458.90px;font-size:14.9px;color:#12272e;">TLSv1.2</div>
<div class="t M" style="left:676.32px;top:458.90px;font-size:14.9px;color:#12272e;">93</div>
<div class="t M" style="left:701.9px;top:458.90px;font-size:14.9px;color:#12272e;">Application Data</div>
<div style="left:0px;top:471px;width:1170px;height:22px;background:#e7e6ff;"></div>
<div class="t M" style="left:35.04px;top:481.90px;font-size:14.9px;color:#12272e;">52Ø2</div>
<div class="t M" style="left:77.8px;top:481.90px;font-size:14.9px;color:#12272e;">424.889693</div>
<div class="t M" style="left:203.3px;top:481.90px;font-size:14.9px;color:#12272e;">192.168.1Ø.251</div>
<div class="t M" style="left:390.3px;top:481.90px;font-size:14.9px;color:#12272e;">96.16.53.156</div>
<div class="t M" style="left:578.7px;top:481.90px;font-size:14.9px;color:#12272e;">TLSv1.2</div>
<div class="t M" style="left:676.32px;top:481.90px;font-size:14.9px;color:#12272e;">78</div>
<div class="t M" style="left:701.9px;top:481.90px;font-size:14.9px;color:#12272e;">Application Data</div>
<div style="left:0px;top:493px;width:1170px;height:23px;background:#a0a0a0;"></div>
<div class="t M" style="left:35.04px;top:503.90px;font-size:14.9px;color:#12272e;">52Ø3</div>
<div class="t M" style="left:77.8px;top:503.90px;font-size:14.9px;color:#12272e;">424.889754</div>
<div class="t M" style="left:203.3px;top:503.90px;font-size:14.9px;color:#12272e;">192.168.1Ø.251</div>
<div class="t M" style="left:390.3px;top:503.90px;font-size:14.9px;color:#12272e;">96.16.53.156</div>
<div class="t M" style="left:578.7px;top:503.90px;font-size:14.9px;color:#12272e;">TCP</div>
<div class="t M" style="left:676.32px;top:503.90px;font-size:14.9px;color:#12272e;">54</div>
<div class="t M" style="left:701.9px;top:503.90px;font-size:14.9px;color:#12272e;">5Ø761   443 [FIN, ACK] Seq=3852 Ack=4447 Win=64512…</div>
<svg style="left:755.54px;top:499px;" width="10" height="9" viewBox="0 0 10 9"><path d="M0.3 4.6 L8.4 4.6 M5.5 1.9 L8.4 4.6 L5.5 7.3" fill="none" stroke="#12272e" stroke-width="1.05"/></svg>
<div style="left:0px;top:516px;width:1170px;height:22px;background:#a40000;"></div>
<div class="t M" style="left:35.04px;top:526.90px;font-size:14.9px;color:#fffc9c;">52Ø7</div>
<div class="t M" style="left:77.8px;top:526.90px;font-size:14.9px;color:#fffc9c;">424.989423</div>
<div class="t M" style="left:203.3px;top:526.90px;font-size:14.9px;color:#fffc9c;">192.168.1Ø.251</div>
<div class="t M" style="left:390.3px;top:526.90px;font-size:14.9px;color:#fffc9c;">96.16.53.156</div>
<div class="t M" style="left:578.7px;top:526.90px;font-size:14.9px;color:#fffc9c;">TCP</div>
<div class="t M" style="left:676.32px;top:526.90px;font-size:14.9px;color:#fffc9c;">54</div>
<div class="t M" style="left:701.9px;top:526.90px;font-size:14.9px;color:#fffc9c;">5Ø761   443 [RST, ACK] Seq=3853 Ack=4471 Win=Ø Len…</div>
<svg style="left:755.54px;top:522px;" width="10" height="9" viewBox="0 0 10 9"><path d="M0.3 4.6 L8.4 4.6 M5.5 1.9 L8.4 4.6 L5.5 7.3" fill="none" stroke="#fffc9c" stroke-width="1.05"/></svg>
<div style="left:3px;top:156px;width:2px;height:146.5px;background:#a4a8b0;"></div>
<div style="left:3px;top:301.5px;width:10px;height:1.2px;background:#a4a8b0;"></div>
<div style="left:1179px;top:495.5px;width:2.8px;height:21.3px;background:#858585;border-radius:1.5px"></div>
<div style="left:0px;top:538px;width:1183px;height:1px;background:#a3acb2;"></div>
<div style="left:0px;top:539px;width:1183px;height:1px;background:#f8f8f8;"></div>
<div style="left:0px;top:540px;width:1183px;height:6px;background:#f0f0f0;"></div>
<div style="left:0px;top:546px;width:594px;height:397px;background:#ffffff;"></div>
<div style="left:594px;top:546px;width:21.5px;height:417px;background:#f0f0f0;"></div>
<div style="left:0px;top:943px;width:594px;height:19.7px;background:#f0f0f0;"></div>
<div style="left:14px;top:943px;width:1px;height:19.7px;background:#fafafa;"></div>
<div style="left:15px;top:950.9px;width:262px;height:2.9px;background:#858585;border-radius:2px"></div>
<div style="left:602px;top:700px;width:2.8px;height:138px;background:#858585;border-radius:1.5px"></div>
<div style="left:615px;top:546px;width:1px;height:417px;background:#8c8c8c;"></div>
<div style="left:0;top:546px;width:594px;height:397px;overflow:hidden">
<div style="left:18px;top:1px;width:576px;height:23px;background:#efefef;"></div>
<div class="t M" style="left:22.0px;top:12.90px;font-size:14.9px;color:#000;">Frame 5166: 66 bytes on wire (528 bits), 66 bytes captured (528 bits) on interface \Device\NPF_{Ø}, id Ø</div>
<svg style="left:0.0px;top:5.0px;" width="14" height="14" viewBox="0 0 14 14"><path d="M4.3 2.5 L8.8 7 L4.3 11.5" fill="none" stroke="#767676" stroke-width="1.3"/></svg>
<div style="left:18px;top:24px;width:576px;height:22px;background:#efefef;"></div>
<div class="t M" style="left:22.0px;top:35.90px;font-size:14.9px;color:#000;">Ethernet II, Src: GigaByteTech_Ø6:75:5d (1Ø:ff:eØ:Ø6:75:5d), Dst: Qotom_f5:35:Ø1 (2Ø:7c:14:f5:35:Ø1)</div>
<svg style="left:0.0px;top:28.0px;" width="14" height="14" viewBox="0 0 14 14"><path d="M1.6 5 L5.9 9.3 L10.2 5" fill="none" stroke="#333" stroke-width="1.3"/></svg>
<div class="t M" style="left:46.7px;top:57.90px;font-size:14.9px;color:#000;">Destination: Qotom_f5:35:Ø1 (2Ø:7c:14:f5:35:Ø1)</div>
<svg style="left:24.7px;top:50.0px;" width="14" height="14" viewBox="0 0 14 14"><path d="M4.3 2.5 L8.8 7 L4.3 11.5" fill="none" stroke="#767676" stroke-width="1.3"/></svg>
<div class="t M" style="left:46.7px;top:80.90px;font-size:14.9px;color:#000;">Source: GigaByteTech_Ø6:75:5d (1Ø:ff:eØ:Ø6:75:5d)</div>
<svg style="left:24.7px;top:73.0px;" width="14" height="14" viewBox="0 0 14 14"><path d="M4.3 2.5 L8.8 7 L4.3 11.5" fill="none" stroke="#767676" stroke-width="1.3"/></svg>
<div class="t M" style="left:46.7px;top:102.90px;font-size:14.9px;color:#000;">Type: IPv4 (ØxØ8ØØ)</div>
<div class="t M" style="left:46.7px;top:125.90px;font-size:14.9px;color:#000;">[Stream index: Ø]</div>
<div style="left:18px;top:136px;width:576px;height:23px;background:#efefef;"></div>
<div class="t M" style="left:22.0px;top:147.90px;font-size:14.9px;color:#000;">Internet Protocol Version 4, Src: 192.168.1Ø.251, Dst: 96.16.53.156</div>
<svg style="left:0.0px;top:140.0px;" width="14" height="14" viewBox="0 0 14 14"><path d="M1.6 5 L5.9 9.3 L10.2 5" fill="none" stroke="#333" stroke-width="1.3"/></svg>
<div class="t M" style="left:46.7px;top:170.90px;font-size:14.9px;color:#000;">Ø1ØØ .... = Version: 4</div>
<div class="t M" style="left:46.7px;top:192.90px;font-size:14.9px;color:#000;">.... Ø1Ø1 = Header Length: 2Ø bytes (5)</div>
<div class="t M" style="left:46.7px;top:215.90px;font-size:14.9px;color:#000;">Differentiated Services Field: ØxØ2 (DSCP: CSØ, ECN: ECT(Ø))</div>
<svg style="left:24.7px;top:208.0px;" width="14" height="14" viewBox="0 0 14 14"><path d="M4.3 2.5 L8.8 7 L4.3 11.5" fill="none" stroke="#767676" stroke-width="1.3"/></svg>
<div class="t M" style="left:46.7px;top:237.90px;font-size:14.9px;color:#000;">Total Length: 52</div>
<div class="t M" style="left:46.7px;top:260.90px;font-size:14.9px;color:#000;">Identification: ØxØ443 (1Ø91)</div>
<div class="t M" style="left:46.7px;top:282.90px;font-size:14.9px;color:#000;">Ø1Ø. .... = Flags: Øx2, Don't fragment</div>
<svg style="left:24.7px;top:275.0px;" width="14" height="14" viewBox="0 0 14 14"><path d="M4.3 2.5 L8.8 7 L4.3 11.5" fill="none" stroke="#767676" stroke-width="1.3"/></svg>
<div class="t M" style="left:46.7px;top:305.90px;font-size:14.9px;color:#000;">...Ø ØØØØ ØØØØ ØØØØ = Fragment Offset: Ø</div>
<div class="t M" style="left:46.7px;top:327.90px;font-size:14.9px;color:#000;">Time to Live: 128</div>
<div class="t M" style="left:46.7px;top:350.90px;font-size:14.9px;color:#000;">Protocol: TCP (6)</div>
<div class="t M" style="left:46.7px;top:372.90px;font-size:14.9px;color:#000;">Header Checksum: Øx952f [validation disabled]</div>
<div class="t M" style="left:46.7px;top:395.90px;font-size:14.9px;color:#000;">[Header checksum status: Unverified]</div>
</div>
<div style="left:622.5px;top:546px;width:560.5px;height:397px;background:#ffffff;"></div>
<div style="left:622.5px;top:546px;width:54.5px;height:397px;background:#f0f0f0;"></div>
<div style="left:622px;top:546px;width:1px;height:417px;background:#8c8c8c;"></div>
<div style="left:623px;top:943px;width:560px;height:19.7px;background:#f0f0f0;"></div>
<div style="left:645.2px;top:950.9px;width:227px;height:2.9px;background:#858585;border-radius:2px"></div>
<div class="t M" style="left:632.2px;top:558.00px;font-size:14.9px;color:#a0a0a0;">ØØØØ</div>
<div class="t M" style="left:685.6px;top:558.00px;font-size:14.9px;color:#000;">2Ø 7c 14 f5 35 Ø1 1Ø ff  eØ Ø6 75 5d Ø8 ØØ 45 Ø2</div>
<div class="t M" style="left:1140.6px;top:558.00px;font-size:14.9px;color:#000"> |<span style="color:#a8a8a8">·</span><span style="color:#a8a8a8">·</span>5<span style="color:#a8a8a8">·</span><span style="color:#a8a8a8">·</span><span style="color:#a8a8a8">·</span>  <span style="color:#a8a8a8">·</span><span style="color:#a8a8a8">·</span>u]<span style="color:#a8a8a8">·</span><span style="color:#a8a8a8">·</span>E<span style="color:#a8a8a8">·</span></div>
<div class="t M" style="left:632.2px;top:577.00px;font-size:14.9px;color:#a0a0a0;">ØØ1Ø</div>
<div class="t M" style="left:685.6px;top:577.00px;font-size:14.9px;color:#000;">ØØ 34 Ø4 43 4Ø ØØ 8Ø Ø6  95 2f cØ a8 Øa fb 6Ø 1Ø</div>
<div class="t M" style="left:1140.6px;top:577.00px;font-size:14.9px;color:#000"><span style="color:#a8a8a8">·</span>4<span style="color:#a8a8a8">·</span>C@<span style="color:#a8a8a8">·</span><span style="color:#a8a8a8">·</span><span style="color:#a8a8a8">·</span>  <span style="color:#a8a8a8">·</span>/<span style="color:#a8a8a8">·</span><span style="color:#a8a8a8">·</span><span style="color:#a8a8a8">·</span><span style="color:#a8a8a8">·</span>`<span style="color:#a8a8a8">·</span></div>
<div class="t M" style="left:632.2px;top:595.00px;font-size:14.9px;color:#a0a0a0;">ØØ2Ø</div>
<div class="t M" style="left:685.6px;top:595.00px;font-size:14.9px;color:#000;">35 9c c6 5c Ø1 bb ff 1a  85 ca ØØ ØØ ØØ ØØ 8Ø c2</div>
<div class="t M" style="left:1140.6px;top:595.00px;font-size:14.9px;color:#000">5<span style="color:#a8a8a8">·</span><span style="color:#a8a8a8">·</span>\<span style="color:#a8a8a8">·</span><span style="color:#a8a8a8">·</span><span style="color:#a8a8a8">·</span><span style="color:#a8a8a8">·</span>  <span style="color:#a8a8a8">·</span><span style="color:#a8a8a8">·</span><span style="color:#a8a8a8">·</span><span style="color:#a8a8a8">·</span><span style="color:#a8a8a8">·</span><span style="color:#a8a8a8">·</span><span style="color:#a8a8a8">·</span><span style="color:#a8a8a8">·</span></div>
<div class="t M" style="left:632.2px;top:614.00px;font-size:14.9px;color:#a0a0a0;">ØØ3Ø</div>
<div class="t M" style="left:685.6px;top:614.00px;font-size:14.9px;color:#000;">ff ff 8f 6b ØØ ØØ Ø2 Ø4  Ø5 b4 Ø1 Ø3 Ø3 Ø8 Ø1 Ø1</div>
<div class="t M" style="left:1140.6px;top:614.00px;font-size:14.9px;color:#000"><span style="color:#a8a8a8">·</span><span style="color:#a8a8a8">·</span><span style="color:#a8a8a8">·</span><span style="color:#a8a8a8">·</span><span style="color:#a8a8a8">·</span><span style="color:#a8a8a8">·</span><span style="color:#a8a8a8">·</span><span style="color:#a8a8a8">·</span>  <span style="color:#a8a8a8">·</span><span style="color:#a8a8a8">·</span><span style="color:#a8a8a8">·</span><span style="color:#a8a8a8">·</span><span style="color:#a8a8a8">·</span><span style="color:#a8a8a8">·</span><span style="color:#a8a8a8">·</span><span style="color:#a8a8a8">·</span></div>
<div class="t M" style="left:632.2px;top:633.00px;font-size:14.9px;color:#a0a0a0;">ØØ4Ø</div>
<div class="t M" style="left:685.6px;top:633.00px;font-size:14.9px;color:#000;">Ø4 Ø2</div>
<div class="t M" style="left:1140.6px;top:633.00px;font-size:14.9px;color:#000"><span style="color:#a8a8a8">·</span><span style="color:#a8a8a8">·</span></div>
<div style="left:0px;top:963px;width:1183px;height:22px;background:#f0f0f0;"></div>
<div style="left:0px;top:963px;width:616px;height:1px;background:#7d848a;"></div>
<div style="left:622px;top:963px;width:561px;height:1px;background:#7d848a;"></div>
<svg style="left:0px;top:962px;" width="60" height="23" viewBox="0 0 60 23"><defs><linearGradient id="gy" x1="0" y1="0" x2="0" y2="1"><stop offset="0" stop-color="#e6e48a"/><stop offset="1" stop-color="#dcd84c"/></linearGradient></defs><circle cx="13.4" cy="16.2" r="8" fill="url(#gy)" stroke="#8a8838" stroke-width="0.9"/><rect x="33.5" y="8.3" width="13.8" height="16" fill="#f4f4f4" stroke="#c8c8c8" stroke-width="0.6"/><rect x="33.5" y="8.2" width="13.8" height="3.2" fill="#2a90d8"/><path d="M38 11.4 C39 10 39.8 9.2 40.4 8.8 L40.6 11.4 Z" fill="#f4f4f4"/><path d="M50.2 9.2 L38.6 19.6" stroke="#555" stroke-width="3" stroke-linecap="round"/><path d="M40 18.5 L37.2 21.2 L38.2 17.6 Z" fill="#333"/></svg>
<div style="left:0px;top:984px;width:1183px;height:1px;background:#eef2f6;"></div>
<div class="t S" style="left:70.90px;top:980.50px;font-size:16px;color:#000;transform:scaleX(0.9141);transform-origin:0 0;">Ethernet (eth), 14 octets</div>
<div style="left:711.5px;top:967px;width:1px;height:18px;background:#a0a0a0;"></div>
<div style="left:714.5px;top:967px;width:1px;height:18px;background:#a0a0a0;"></div>
<div class="t S" style="left:730.60px;top:980.50px;font-size:16px;color:#000;transform:scaleX(0.8892);transform-origin:0 0;">Paquets : 5207 · Affichés : 2339 (44.9%)</div>
<div style="left:1051.5px;top:967px;width:1px;height:18px;background:#a0a0a0;"></div>
<div style="left:1054.5px;top:967px;width:1px;height:18px;background:#a0a0a0;"></div>
<div class="t S" style="left:1069.50px;top:980.50px;font-size:16px;color:#000;transform:scaleX(0.9266);transform-origin:0 0;">Profil : Default</div>
<div style="left:1170px;top:967px;width:1px;height:18px;background:#a0a0a0;"></div>
<div style="left:250.4px;top:276.4px;width:407.80000000000007px;height:492.20000000000005px;background:#f9f9f9;box-shadow:0 0 0 0.6px #e4e4e4"></div>
<div style="left:254px;top:279.5px;width:401px;height:485.5px;background:#f0f0f0;"></div>
<div style="left:280.2px;top:279.5px;width:2.8px;height:485.5px;background:#f8f8f8;"></div>
<div style="left:283px;top:422.1px;width:371px;height:1px;background:#d9d9d9;"></div>
<div style="left:283px;top:460.9px;width:371px;height:1px;background:#d9d9d9;"></div>
<div style="left:283px;top:636.9px;width:371px;height:1px;background:#d9d9d9;"></div>
<div style="left:283px;top:676.0px;width:371px;height:1px;background:#d9d9d9;"></div>
<div style="left:253.5px;top:604.9px;width:396.8px;height:27.0px;background:#91c9f7;"></div>
<div class="t S" style="left:288.40px;top:294.70px;font-size:15.5px;color:#000;transform:scaleX(0.9517);transform-origin:0 0;">Marquer/Démarquer Sélectionné(s)</div>
<div class="t S" style="left:558.80px;top:294.70px;font-size:15.5px;color:#000;transform:scaleX(0.9964);transform-origin:0 0;">Ctrl+M</div>
<div class="t S" style="left:288.40px;top:321.50px;font-size:15.5px;color:#000;transform:scaleX(0.9467);transform-origin:0 0;">Ignorer/Considérer Sélectionné(s)</div>
<div class="t S" style="left:558.80px;top:321.50px;font-size:15.5px;color:#000;transform:scaleX(0.9809);transform-origin:0 0;">Ctrl+D</div>
<div class="t S" style="left:288.40px;top:349.00px;font-size:15.5px;color:#000;transform:scaleX(0.9305);transform-origin:0 0;">Fixer/Defixer le Temps de Réference</div>
<div class="t S" style="left:558.80px;top:349.00px;font-size:15.5px;color:#000;transform:scaleX(0.9666);transform-origin:0 0;">Ctrl+T</div>
<div class="t S" style="left:288.40px;top:376.50px;font-size:15.5px;color:#000;transform:scaleX(0.9147);transform-origin:0 0;">Décalage dans le temps…</div>
<div class="t S" style="left:558.80px;top:376.50px;font-size:15.5px;color:#000;transform:scaleX(0.9942);transform-origin:0 0;">Ctrl+Maj+T</div>
<div class="t S" style="left:288.40px;top:404.10px;font-size:15.5px;color:#000;transform:scaleX(0.9410);transform-origin:0 0;">Commentaires sur les paquets</div>
<svg style="left:634px;top:398.4px;" width="8" height="10" viewBox="0 0 8 10"><path d="M1 0.6 L6.2 5 L1 9.4 Z" fill="#000"/></svg>
<div class="t S" style="left:288.40px;top:442.50px;font-size:15.5px;color:#000;transform:scaleX(0.9325);transform-origin:0 0;">Editer Nom Résolu</div>
<div class="t S" style="left:288.40px;top:481.40px;font-size:15.5px;color:#000;transform:scaleX(0.9679);transform-origin:0 0;">Appliquer comme un Filtre</div>
<svg style="left:634px;top:475.7px;" width="8" height="10" viewBox="0 0 8 10"><path d="M1 0.6 L6.2 5 L1 9.4 Z" fill="#000"/></svg>
<div class="t S" style="left:288.40px;top:508.90px;font-size:15.5px;color:#000;transform:scaleX(0.9583);transform-origin:0 0;">Préparer comme filtre</div>
<svg style="left:634px;top:503.2px;" width="8" height="10" viewBox="0 0 8 10"><path d="M1 0.6 L6.2 5 L1 9.4 Z" fill="#000"/></svg>
<div class="t S" style="left:288.40px;top:536.40px;font-size:15.5px;color:#000;transform:scaleX(0.9418);transform-origin:0 0;">Filtre de Conversation</div>
<svg style="left:634px;top:530.7px;" width="8" height="10" viewBox="0 0 8 10"><path d="M1 0.6 L6.2 5 L1 9.4 Z" fill="#000"/></svg>
<div class="t S" style="left:288.40px;top:563.90px;font-size:15.5px;color:#000;transform:scaleX(0.9437);transform-origin:0 0;">Colorier la Conversation</div>
<svg style="left:634px;top:558.2px;" width="8" height="10" viewBox="0 0 8 10"><path d="M1 0.6 L6.2 5 L1 9.4 Z" fill="#000"/></svg>
<div class="t S" style="left:288.40px;top:591.40px;font-size:15.5px;color:#000;transform:scaleX(0.7814);transform-origin:0 0;">SCTP</div>
<svg style="left:634px;top:585.7px;" width="8" height="10" viewBox="0 0 8 10"><path d="M1 0.6 L6.2 5 L1 9.4 Z" fill="#000"/></svg>
<div class="t S" style="left:288.40px;top:619.00px;font-size:15.5px;color:#000;transform:scaleX(0.8852);transform-origin:0 0;">Suivre</div>
<svg style="left:634px;top:613.3px;" width="8" height="10" viewBox="0 0 8 10"><path d="M1 0.6 L6.2 5 L1 9.4 Z" fill="#000"/></svg>
<div class="t S" style="left:288.40px;top:657.40px;font-size:15.5px;color:#000;transform:scaleX(0.9329);transform-origin:0 0;">Copier</div>
<svg style="left:634px;top:651.7px;" width="8" height="10" viewBox="0 0 8 10"><path d="M1 0.6 L6.2 5 L1 9.4 Z" fill="#000"/></svg>
<div class="t S" style="left:288.40px;top:696.10px;font-size:15.5px;color:#000;transform:scaleX(0.9476);transform-origin:0 0;">Préférences de protocole</div>
<svg style="left:634px;top:690.4px;" width="8" height="10" viewBox="0 0 8 10"><path d="M1 0.6 L6.2 5 L1 9.4 Z" fill="#000"/></svg>
<div class="t S" style="left:288.40px;top:723.60px;font-size:15.5px;color:#000;transform:scaleX(0.9218);transform-origin:0 0;">Décoder comme…</div>
<div class="t S" style="left:288.40px;top:751.10px;font-size:15.5px;color:#000;transform:scaleX(0.9436);transform-origin:0 0;">Affiche Paquet dans Nouvelle Fenêtre</div>
<div style="left:650.5px;top:601.5px;width:257.1px;height:34.10000000000002px;background:#f9f9f9;box-shadow:0 0 0 0.6px #e4e4e4"></div>
<div style="left:654px;top:604.7px;width:250px;height:27.3px;background:#f0f0f0;"></div>
<div style="left:680px;top:604.7px;width:3px;height:27.3px;background:#f8f8f8;"></div>
<div class="t S" style="left:687.70px;top:619.30px;font-size:15.5px;color:#000;transform:scaleX(0.8521);transform-origin:0 0;">TCP Flux</div>
<div class="t S" style="left:778.80px;top:619.30px;font-size:15.5px;color:#000;transform:scaleX(1.0020);transform-origin:0 0;">Ctrl+Alt+Maj+T</div>
</body></html>
